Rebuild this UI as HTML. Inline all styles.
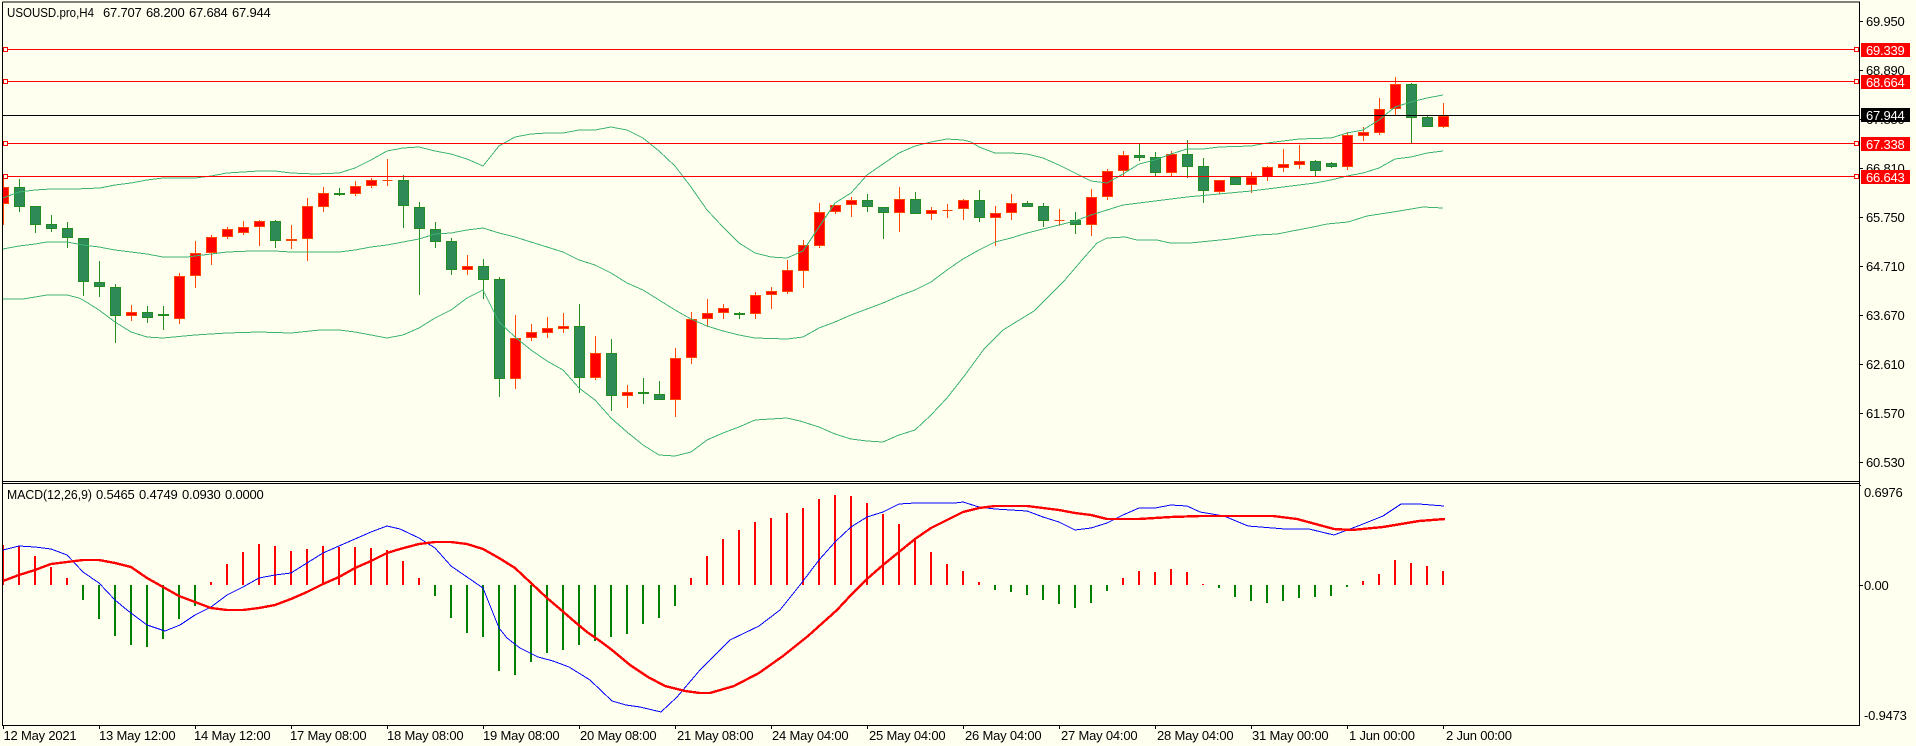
<!DOCTYPE html>
<html><head><meta charset="utf-8"><title>USOUSD.pro,H4</title>
<style>
html,body{margin:0;padding:0;background:#FFFFF0;width:1916px;height:746px;overflow:hidden}
svg{display:block}
text{font-family:"Liberation Sans",sans-serif;font-size:13px;letter-spacing:-.2px;fill:#000}
.w{fill:#fff}
.c{shape-rendering:crispEdges;fill:none}
</style></head><body>
<svg width="1916" height="746" viewBox="0 0 1916 746" xmlns="http://www.w3.org/2000/svg">
<defs>
<clipPath id="a"><rect x="3" y="3" width="1856" height="478"/></clipPath>
<clipPath id="b"><rect x="3" y="484" width="1856" height="241"/></clipPath>
</defs>
<rect width="1916" height="746" fill="#FFFFF0"/>
<g clip-path="url(#a)">
<path class="c" stroke="#228B22" d="M19.5 179V212M35.5 206V233M51.5 215V232M67.5 222V248M83.5 238V296M99.5 261V297M115.5 284V343M147.5 306V323M163.5 306V330M275.5 220V248M339.5 188V196M403.5 175V228M419.5 202V295M435.5 222V248M451.5 238V275M483.5 259V299M499.5 277V397M579.5 304V393M611.5 339V411M643.5 378V404M659.5 381V400M739.5 312V319M867.5 194V212M883.5 207V239M915.5 192V214M979.5 190V222M1027.5 201V207M1043.5 203V227M1075.5 212V234M1139.5 144V161M1155.5 152V176M1187.5 140V178M1203.5 158V203M1235.5 177V185M1315.5 160V176M1331.5 162V168M1411.5 83V143M1427.5 116V127"/>
<path class="c" stroke="#FF4500" d="M3.5 176V225M131.5 305V321M179.5 273V324M195.5 241V288M211.5 235V265M227.5 227V239M243.5 221V235M259.5 220V246M291.5 225V249M307.5 198V261M323.5 187V212M355.5 181V196M371.5 178V188M387.5 159V186M467.5 255V275M515.5 315V389M531.5 324V341M547.5 317V338M563.5 313V333M595.5 336V380M627.5 385V408M675.5 348V417M691.5 312V364M707.5 299V327M723.5 304V319M755.5 292V319M771.5 287V309M787.5 260V294M803.5 240V288M819.5 203V248M835.5 205V214M851.5 197V217M899.5 187V232M931.5 207V220M947.5 204V218M963.5 199V220M995.5 206V246M1011.5 194V220M1059.5 209V226M1091.5 189V236M1107.5 169V200M1123.5 151V176M1171.5 151V176M1219.5 180V194M1251.5 172V193M1267.5 166V181M1283.5 149V172M1299.5 145V169M1347.5 132V170M1363.5 127V141M1379.5 98V135M1395.5 77V115M1443.5 103V128"/>
<path style="shape-rendering:crispEdges" fill="#2E8B57" stroke="#228B22" d="M14.5 187.5h10v19h-10zM30.5 206.5h10v18h-10zM46.5 224.5h10v4h-10zM62.5 228.5h10v9h-10zM78.5 238.5h10v43h-10zM94.5 282.5h10v4h-10zM110.5 287.5h10v28h-10zM142.5 312.5h10v5h-10zM158.5 314.5h10v1h-10zM270.5 221.5h10v19h-10zM334.5 193.5h10v1h-10zM398.5 180.5h10v25h-10zM414.5 207.5h10v21h-10zM430.5 229.5h10v12h-10zM446.5 241.5h10v28h-10zM478.5 266.5h10v13h-10zM494.5 279.5h10v99h-10zM574.5 326.5h10v51h-10zM606.5 353.5h10v42h-10zM638.5 392.5h10v1h-10zM654.5 394.5h10v5h-10zM734.5 313.5h10v1h-10zM862.5 200.5h10v6h-10zM878.5 207.5h10v5h-10zM910.5 199.5h10v14h-10zM974.5 200.5h10v17h-10zM1022.5 203.5h10v3h-10zM1038.5 206.5h10v14h-10zM1070.5 220.5h10v4h-10zM1134.5 155.5h10v2h-10zM1150.5 157.5h10v15h-10zM1182.5 154.5h10v12h-10zM1198.5 166.5h10v24h-10zM1230.5 177.5h10v7h-10zM1310.5 161.5h10v9h-10zM1326.5 163.5h10v3h-10zM1406.5 84.5h10v33h-10zM1422.5 117.5h10v9h-10z"/>
<path style="shape-rendering:crispEdges" fill="#FF0000" stroke="#FF4500" d="M-1.5 187.5h10v16h-10zM126.5 312.5h10v3h-10zM174.5 276.5h10v42h-10zM190.5 253.5h10v22h-10zM206.5 237.5h10v15h-10zM222.5 229.5h10v7h-10zM238.5 227.5h10v5h-10zM254.5 221.5h10v5h-10zM286.5 239.5h10v1h-10zM302.5 206.5h10v32h-10zM318.5 193.5h10v13h-10zM350.5 186.5h10v7h-10zM366.5 180.5h10v5h-10zM382.5 180.5h10zM462.5 266.5h10v3h-10zM510.5 338.5h10v40h-10zM526.5 332.5h10v5h-10zM542.5 328.5h10v4h-10zM558.5 326.5h10v2h-10zM590.5 353.5h10v24h-10zM622.5 392.5h10v3h-10zM670.5 358.5h10v41h-10zM686.5 319.5h10v38h-10zM702.5 313.5h10v5h-10zM718.5 308.5h10v4h-10zM750.5 295.5h10v18h-10zM766.5 291.5h10v3h-10zM782.5 270.5h10v21h-10zM798.5 245.5h10v25h-10zM814.5 212.5h10v33h-10zM830.5 205.5h10v6h-10zM846.5 200.5h10v4h-10zM894.5 199.5h10v13h-10zM926.5 210.5h10v3h-10zM942.5 210.5h10zM958.5 200.5h10v8h-10zM990.5 213.5h10v4h-10zM1006.5 203.5h10v9h-10zM1054.5 220.5h10zM1086.5 197.5h10v27h-10zM1102.5 171.5h10v25h-10zM1118.5 155.5h10v15h-10zM1166.5 154.5h10v18h-10zM1214.5 180.5h10v11h-10zM1246.5 177.5h10v7h-10zM1262.5 167.5h10v9h-10zM1278.5 164.5h10v3h-10zM1294.5 161.5h10v3h-10zM1342.5 135.5h10v31h-10zM1358.5 132.5h10v3h-10zM1374.5 109.5h10v23h-10zM1390.5 84.5h10v24h-10zM1438.5 116.5h10v10h-10z"/>
<g class="c" stroke="#3CB371" stroke-width="1">
<polyline fill="none" points="3,198 19,192 35,190 51,189 75,189 100,188 115,185 131,183 147,180 163,178 195,178 211,176 227,173 243,172 259,171 275,171 291,173 315,174 339,173 355,168 371,160 387,151 403,148 419,147 435,151 451,154 467,159 483,166 491,156 499,146 515,137 531,134 547,133 563,133 579,130 595,130 611,127 627,130 643,138 659,151 675,166 691,187 707,210 723,227 739,243 755,253 771,257 787,258 803,251 819,227 835,203 851,193 867,175 883,164 899,153 915,146 931,142 947,139 963,140 971,142 979,147 995,153 1011,153 1027,154 1043,158 1059,165 1075,173 1091,181 1107,183 1123,174 1139,164 1155,160 1171,154 1187,149 1203,149 1219,147 1251,146 1267,143 1283,141 1299,139 1331,138 1347,133 1363,130 1379,120 1395,107 1411,102 1427,98 1443,95"/>
<polyline fill="none" points="3,249 19,246 35,244 47,242 67,242 83,245 99,247 115,250 131,252 147,254 163,257 187,257 211,254 227,252 251,251 275,251 291,252 339,252 355,250 371,247 387,245 403,242 419,239 435,234 451,233 467,230 483,228 499,233 515,237 531,242 547,247 563,252 579,260 595,265 611,273 627,283 643,290 659,300 675,310 691,319 707,326 723,331 739,335 755,338 787,339 803,337 819,328 835,322 851,315 867,309 883,303 899,296 915,290 931,282 947,270 963,259 979,250 995,242 1011,238 1027,233 1059,225 1075,221 1091,215 1107,210 1123,205 1139,203 1171,199 1187,197 1219,194 1251,191 1283,187 1315,183 1331,180 1347,176 1363,173 1379,168 1395,159 1411,157 1427,153 1443,151"/>
<polyline fill="none" points="3,299 23,299 35,297 47,295 67,295 79,298 83,300 99,310 115,322 131,332 147,337 163,338 195,335 227,333 259,332 291,333 320,330 339,330 355,332 371,335 387,338 403,335 419,328 435,318 451,310 467,298 483,290 491,306 499,322 515,337 531,350 547,361 563,370 579,388 595,400 611,418 627,432 643,445 659,455 675,456 691,452 707,440 723,433 739,427 755,420 771,419 787,418 800,421 819,427 835,434 851,439 867,441 883,442 899,435 915,430 931,415 947,398 965,375 984,349 1003,330 1034,311 1064,281 1082,260 1097,243 1107,238 1125,237 1137,240 1157,240 1170,243 1190,243 1210,241 1230,239 1257,235 1277,234 1313,227 1327,224 1348,222 1367,216 1393,212 1423,207 1443,208"/>
</g>
</g>
<g class="c" clip-path="url(#b)">
<path stroke="#FF0000" stroke-width="2" d="M3 585V545M19 585V546M35 585V556M51 585V567M67 585V578M211 585V582M227 585V564M243 585V552M259 585V544M275 585V546M291 585V551M307 585V549M323 585V546M339 585V547M355 585V547M371 585V548M387 585V550M403 585V561M419 585V578M691 585V578M707 585V556M723 585V539M739 585V530M755 585V522M771 585V518M787 585V513M803 585V508M819 585V499M835 585V495M851 585V496M867 585V503M883 585V514M899 585V524M915 585V540M931 585V552M947 585V564M963 585V571M979 585V582M1123 585V578M1139 585V571M1155 585V572M1171 585V569M1187 585V572M1203 585V584M1363 585V581M1379 585V574M1395 585V560M1411 585V563M1427 585V566M1443 585V571"/>
<path stroke="#008000" stroke-width="2" d="M83 585V600M99 585V619M115 585V636M131 585V645M147 585V647M163 585V639M179 585V619M195 585V606M435 585V596M451 585V618M467 585V633M483 585V637M499 585V671M515 585V675M531 585V662M547 585V653M563 585V650M579 585V645M595 585V641M611 585V637M627 585V634M643 585V624M659 585V618M675 585V606M995 585V590M1011 585V592M1027 585V595M1043 585V600M1059 585V604M1075 585V608M1091 585V603M1107 585V591M1219 585V588M1235 585V597M1251 585V601M1267 585V603M1283 585V601M1299 585V598M1315 585V597M1331 585V596M1347 585V587"/>
<polyline stroke="#0000FF" stroke-width="1" points="3,550 19,546 35,547 51,549 67,555 83,572 99,583 115,600 127,610 147,625 165,631 180,625 195,615 211,607 227,595 243,587 259,578 275,575 291,573 307,563 323,553 339,546 355,539 371,532 387,526 400,529 419,538 435,548 451,566 467,577 483,588 491,608 499,628 507,638 520,648 538,657 553,661 569,667 590,680 612,701 626,705 640,707 661,712 677,697 700,670 730,640 759,626 780,610 800,585 819,560 835,542 851,527 867,517 883,512 899,504 915,503 955,503 963,502 979,507 995,509 1027,511 1043,517 1059,522 1075,530 1091,528 1107,523 1123,515 1139,508 1155,508 1171,505 1187,506 1200,512 1224,516 1248,526 1285,529 1309,529 1334,535 1358,526 1383,516 1401,504 1419,504 1444,506"/>
<polyline stroke="#FF0000" stroke-width="2.4" points="3,581 19,575 35,570 51,564 67,562 83,560 99,560 115,563 131,567 147,578 163,587 179,596 195,602 211,608 227,610 243,610 259,608 275,605 291,599 307,592 323,584 339,577 355,568 371,561 387,553 400,549 419,544 435,542 451,542 467,544 483,549 499,558 515,568 531,583 547,598 560,609 575,622 587,632 600,641 612,650 630,665 648,677 665,686 685,691 700,693 710,693 734,686 759,673 783,656 808,636 837,610 851,595 867,579 883,565 899,552 915,539 931,528 947,520 963,512 979,508 995,506 1027,506 1043,508 1059,510 1075,513 1091,515 1107,519 1139,519 1171,517 1200,516 1224,516 1273,516 1297,519 1334,529 1352,530 1383,527 1419,521 1445,519"/>
</g>
<g class="c" stroke="#FF0000">
<path d="M3 49.5H1859M3 81.5H1859M3 143.5H1859M3 176.5H1859"/>
</g>
<path class="c" stroke="#000" d="M3 115.5H1859"/>
<g style="shape-rendering:crispEdges" fill="#FFFFF0" stroke="#FF0000">
<rect x="3.5" y="47.5" width="4" height="4"/><rect x="3.5" y="79.5" width="4" height="4"/><rect x="3.5" y="141.5" width="4" height="4"/><rect x="3.5" y="174.5" width="4" height="4"/>
<rect x="1854.5" y="47.5" width="4" height="4"/><rect x="1854.5" y="79.5" width="4" height="4"/><rect x="1854.5" y="141.5" width="4" height="4"/><rect x="1854.5" y="174.5" width="4" height="4"/>
</g>
<path class="c" stroke="#000" d="M2.5 2V725.5H1859.5V2H2.5M3 481.5H1859M3 483.5H1860M1860 21.5H1863M1860 70.5H1863M1860 119.5H1863M1860 168.5H1863M1860 217.5H1863M1860 266.5H1863M1860 315.5H1863M1860 364.5H1863M1860 413.5H1863M1860 462.5H1863M1860 585.5H1863M1860 485.5H1861M3.5 726V729M99.5 726V729M195.5 726V729M291.5 726V729M387.5 726V729M483.5 726V729M579.5 726V729M675.5 726V729M771.5 726V729M867.5 726V729M963.5 726V729M1059.5 726V729M1155.5 726V729M1251.5 726V729M1347.5 726V729M1443.5 726V729"/>
<text x="7" y="17" textLength="87" lengthAdjust="spacingAndGlyphs" style="letter-spacing:0">USOUSD.pro,H4</text><text x="103" y="17">67.707</text><text x="146" y="17">68.200</text><text x="189" y="17">67.684</text><text x="232" y="17">67.944</text>
<text x="7" y="499" textLength="85" lengthAdjust="spacingAndGlyphs" style="letter-spacing:0">MACD(12,26,9)</text><text x="96" y="499">0.5465</text><text x="139" y="499">0.4749</text><text x="182" y="499">0.0930</text><text x="225" y="499">0.0000</text>
<text x="1866" y="26">69.950</text><text x="1866" y="75">68.890</text><text x="1866" y="124">67.850</text><text x="1866" y="173">66.810</text><text x="1866" y="222">65.750</text><text x="1866" y="271">64.710</text><text x="1866" y="320">63.670</text><text x="1866" y="369">62.610</text><text x="1866" y="418">61.570</text><text x="1866" y="467">60.530</text>
<text x="1864" y="497">0.6976</text><text x="1864" y="590">0.00</text><text x="1864" y="720">-0.9473</text>
<g style="shape-rendering:crispEdges"><rect x="1861" y="43" width="49" height="14" fill="#FF0000"/><rect x="1861" y="75" width="49" height="14" fill="#FF0000"/><rect x="1861" y="108" width="49" height="14" fill="#000"/><rect x="1861" y="137" width="49" height="14" fill="#FF0000"/><rect x="1861" y="170" width="49" height="14" fill="#FF0000"/></g>
<text class="w" x="1866" y="55">69.339</text><text class="w" x="1866" y="87">68.664</text><text class="w" x="1866" y="120">67.944</text><text class="w" x="1866" y="149">67.338</text><text class="w" x="1866" y="182">66.643</text>
<text x="3.5" y="740">12 May 2021</text><text x="99" y="740">13 May 12:00</text><text x="194" y="740">14 May 12:00</text><text x="290" y="740">17 May 08:00</text><text x="387" y="740">18 May 08:00</text><text x="483" y="740">19 May 08:00</text><text x="580" y="740">20 May 08:00</text><text x="677" y="740">21 May 08:00</text><text x="772" y="740">24 May 04:00</text><text x="869" y="740">25 May 04:00</text><text x="965" y="740">26 May 04:00</text><text x="1061" y="740">27 May 04:00</text><text x="1157" y="740">28 May 04:00</text><text x="1252" y="740">31 May 00:00</text><text x="1349" y="740">1 Jun 00:00</text><text x="1446" y="740">2 Jun 00:00</text>
</svg>
</body></html>
